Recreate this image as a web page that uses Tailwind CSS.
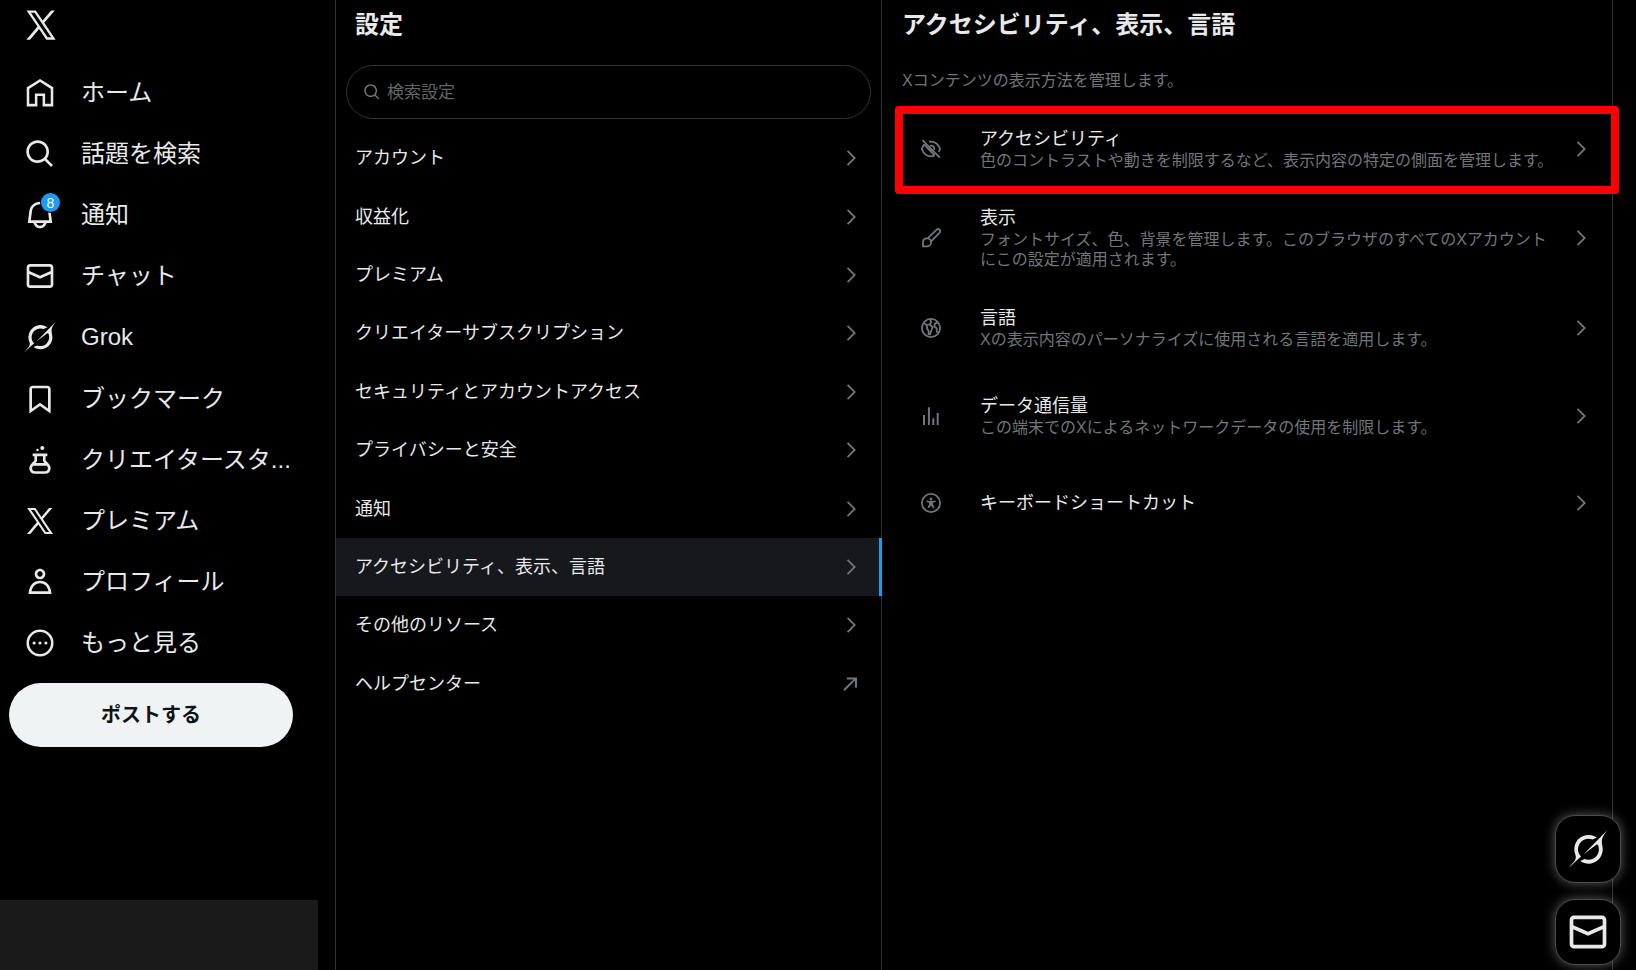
<!DOCTYPE html>
<html lang="ja">
<head>
  <meta charset="UTF-8" />
  <meta name="viewport" content="width=device-width, initial-scale=1.0" />
  <title>設定 / X</title>
  <script src="https://cdn.jsdelivr.net/npm/@tailwindcss/browser@4"></script>
</head>
<body class="bg-black text-[#e7e9ea] font-['Liberation_Sans','Noto_Sans_CJK_JP',sans-serif] overflow-hidden">
  <!-- shared icons -->
  <svg class="hidden">
    <symbol id="x" viewBox="0 0 24 24"><path d="M21.742 21.75l-7.563-11.179 7.056-8.321h-2.456l-5.691 6.714-4.54-6.714H2.359l7.29 10.776L2.25 21.75h2.456l6.035-7.118 4.818 7.118h6.191-.008zM7.739 3.818L18.81 20.182h-2.447L5.29 3.818h2.447z"/></symbol>
    <symbol id="grok" viewBox="0 0 33 32"><path d="M12.745 20.54l10.97-8.19c.539-.4 1.307-.244 1.564.38 1.349 3.288.746 7.241-1.938 9.955-2.683 2.714-6.417 3.31-9.83 1.954l-3.728 1.745c5.347 3.697 11.84 2.782 15.898-1.324 3.219-3.255 4.216-7.692 3.284-11.693l.008.009c-1.351-5.878.332-8.227 3.782-13.031L33 0l-4.54 4.59v-.014L12.743 20.544m-2.263 1.987c-3.837-3.707-3.175-9.446.1-12.755 2.42-2.449 6.388-3.448 9.852-1.979l3.72-1.737c-.67-.49-1.53-1.017-2.515-1.387-4.455-1.854-9.789-.931-13.41 2.728-3.483 3.523-4.579 8.94-2.697 13.561 1.405 3.454-.899 5.898-3.22 8.364C1.49 30.2.666 31.074 0 32l10.478-9.466"/></symbol>
    <symbol id="mail" viewBox="0 0 24 24"><path d="M1.998 5.5c0-1.381 1.119-2.5 2.5-2.5h15c1.381 0 2.5 1.119 2.5 2.5v13c0 1.381-1.119 2.5-2.5 2.5h-15c-1.381 0-2.5-1.119-2.5-2.5v-13zm2.5-.5c-.276 0-.5.224-.5.5v2.764l8 3.638 8-3.636V5.5c0-.276-.224-.5-.5-.5h-15zm15.5 5.463l-8 3.636-8-3.638V18.5c0 .276.224.5.5.5h15c.276 0 .5-.224.5-.5v-8.037z"/></symbol>
    <symbol id="search" viewBox="0 0 24 24"><path d="M10.25 3.75c-3.59 0-6.5 2.91-6.5 6.5s2.91 6.5 6.5 6.5c1.795 0 3.419-.726 4.596-1.904 1.178-1.177 1.904-2.801 1.904-4.596 0-3.59-2.91-6.5-6.5-6.5zm-8.5 6.5c0-4.694 3.806-8.5 8.5-8.5s8.5 3.806 8.5 8.5c0 1.986-.682 3.815-1.824 5.262l4.781 4.781-1.414 1.414-4.781-4.781c-1.447 1.142-3.276 1.824-5.262 1.824-4.694 0-8.5-3.806-8.5-8.5z"/></symbol>
    <symbol id="chevron" viewBox="0 0 24 24"><path d="M14.586 12L7.543 4.96l1.414-1.42L17.414 12l-8.457 8.46-1.414-1.42L14.586 12z"/></symbol>
  </svg>

  <div class="flex h-screen">
    <header class="relative w-[336px] shrink-0 border-r border-[#2f3336]">
      <a href="#" aria-label="X" class="block pl-[23px] pt-[7px]"><svg class="size-9 fill-current"><use href="#x"/></svg></a>
      <nav class="mt-[19px] flex h-[612px] flex-col pl-6 text-2xl">
        <a href="#" class="flex flex-1 items-center gap-[25px]">
          <svg class="size-8" viewBox="0 0 24 24" fill="none" stroke="currentColor" stroke-width="1.9"><path d="M3 8.3L12 2.6l9 5.7v12.8h-6.1v-7.8H9.1v7.8H3z"/></svg>
          <span>ホーム</span>
        </a>
        <a href="#" class="flex flex-1 items-center gap-[25px]">
          <svg class="size-8 fill-current"><use href="#search"/></svg>
          <span>話題を検索</span>
        </a>
        <a href="#" class="flex flex-1 items-center gap-[25px]">
          <span class="relative">
            <svg class="size-8 fill-current" viewBox="0 0 24 24"><path d="M19.993 9.042C19.48 5.017 16.054 2 11.996 2s-7.49 3.021-7.999 7.051L2.866 18H7.1c.463 2.282 2.481 4 4.9 4s4.437-1.718 4.9-4h4.236l-1.143-8.958zM12 20c-1.306 0-2.417-.835-2.829-2h5.658c-.412 1.165-1.523 2-2.829 2zm-6.866-4l.847-6.698C6.364 6.272 8.941 4 11.996 4s5.627 2.268 6.013 5.295L18.864 16H5.134z"/></svg>
            <span class="absolute -top-[6px] left-[17px] flex size-[19px] items-center justify-center rounded-full bg-[#1d9bf0] text-sm text-white ring-1 ring-black">8</span>
          </span>
          <span>通知</span>
        </a>
        <a href="#" class="flex flex-1 items-center gap-[25px]">
          <svg class="size-8 fill-current"><use href="#mail"/></svg>
          <span>チャット</span>
        </a>
        <a href="#" class="flex flex-1 items-center gap-[25px]">
          <svg class="size-8 fill-current"><use href="#grok"/></svg>
          <span>Grok</span>
        </a>
        <a href="#" class="flex flex-1 items-center gap-[25px]">
          <svg class="size-8 fill-current" viewBox="0 0 24 24"><path d="M4 4.5C4 3.12 5.119 2 6.5 2h11C18.881 2 20 3.12 20 4.5v18.44l-8-5.71-8 5.71V4.5zM6.5 4c-.276 0-.5.22-.5.5v14.56l6-4.29 6 4.29V4.5c0-.28-.224-.5-.5-.5h-11z"/></svg>
          <span>ブックマーク</span>
        </a>
        <a href="#" class="flex flex-1 items-center gap-[25px]">
          <svg class="size-8" viewBox="0 0 24 24" fill="none" stroke="currentColor" stroke-width="2">
            <path d="M6.5 8.2h11M8.8 8.2v4.4l-2.600 2.800C3.800 18 5.400 21.400 8 21.400h8c2.600 0 4.200-3.400 1.800-6l-2.600-2.800V8.200M6.600 15.300h10.800"/>
            <circle cx="10.100" cy="4.500" r=".9" fill="currentColor" stroke="none"/>
            <circle cx="13.700" cy="3" r="1.500" fill="currentColor" stroke="none"/>
          </svg>
          <span>クリエイタースタ...</span>
        </a>
        <a href="#" class="flex flex-1 items-center gap-[25px]">
          <svg class="size-8 fill-current"><use href="#x"/></svg>
          <span>プレミアム</span>
        </a>
        <a href="#" class="flex flex-1 items-center gap-[25px]">
          <svg class="size-8 fill-current" viewBox="0 0 24 24"><path d="M5.651 19h12.698c-.337-1.8-1.023-3.21-1.945-4.19C15.318 13.65 13.838 13 12 13s-3.317.65-4.404 1.81c-.922.98-1.608 2.39-1.945 4.19zm.486-5.56C7.627 11.85 9.648 11 12 11s4.373.85 5.863 2.44c1.477 1.58 2.366 3.8 2.632 6.46l.11 1.1H3.395l.11-1.1c.266-2.66 1.155-4.88 2.632-6.46zM12 4c-1.105 0-2 .9-2 2s.895 2 2 2 2-.9 2-2-.895-2-2-2zM8 6c0-2.21 1.791-4 4-4s4 1.79 4 4-1.791 4-4 4-4-1.79-4-4z"/></svg>
          <span>プロフィール</span>
        </a>
        <a href="#" class="flex flex-1 items-center gap-[25px]">
          <svg class="size-8 fill-current" viewBox="0 0 24 24">
            <circle cx="12" cy="12" r="9.2" fill="none" stroke="currentColor" stroke-width="1.9"/>
            <circle cx="7.6" cy="12" r="1.2"/><circle cx="12" cy="12" r="1.2"/><circle cx="16.4" cy="12" r="1.2"/>
          </svg>
          <span>もっと見る</span>
        </a>
      </nav>
      <button class="ml-[9px] mt-[9px] h-16 w-[284px] rounded-full bg-[#eff3f4] text-xl font-bold text-[#0f1419]">ポストする</button>
      <div class="absolute bottom-0 left-0 h-[70px] w-[318px] bg-[#1a1a1a]"></div>
    </header>

    <section class="w-[546px] shrink-0 border-r border-[#2f3336]">
      <h1 class="pl-[19px] pt-[9px] text-2xl font-bold leading-8">設定</h1>
      <label class="mx-[10px] mb-[10px] mt-[24px] flex h-[54px] items-center gap-[6px] rounded-full border border-[#2f3336] pl-4 text-[#71767b]">
        <svg class="size-[18px] fill-current"><use href="#search"/></svg>
        <input type="text" aria-label="検索設定" placeholder="検索設定" class="flex-1 bg-transparent pt-[2px] text-[17px] outline-none placeholder:text-[#626567]" />
      </label>
      <nav class="flex h-[584px] flex-col text-lg">
        <a href="#" class="flex flex-1 items-center justify-between px-[19px]">アカウント<svg class="size-[22px] fill-[#71767b]"><use href="#chevron"/></svg></a>
        <a href="#" class="flex flex-1 items-center justify-between px-[19px]">収益化<svg class="size-[22px] fill-[#71767b]"><use href="#chevron"/></svg></a>
        <a href="#" class="flex flex-1 items-center justify-between px-[19px]">プレミアム<svg class="size-[22px] fill-[#71767b]"><use href="#chevron"/></svg></a>
        <a href="#" class="flex flex-1 items-center justify-between px-[19px]">クリエイターサブスクリプション<svg class="size-[22px] fill-[#71767b]"><use href="#chevron"/></svg></a>
        <a href="#" class="flex flex-1 items-center justify-between px-[19px]">セキュリティとアカウントアクセス<svg class="size-[22px] fill-[#71767b]"><use href="#chevron"/></svg></a>
        <a href="#" class="flex flex-1 items-center justify-between px-[19px]">プライバシーと安全<svg class="size-[22px] fill-[#71767b]"><use href="#chevron"/></svg></a>
        <a href="#" class="flex flex-1 items-center justify-between px-[19px]">通知<svg class="size-[22px] fill-[#71767b]"><use href="#chevron"/></svg></a>
        <a href="#" aria-current="page" class="-mr-px flex flex-1 items-center justify-between border-r-3 border-[#1d9bf0] bg-[#16181c] pl-[19px] pr-[17px]">アクセシビリティ、表示、言語<svg class="size-[22px] fill-[#71767b]"><use href="#chevron"/></svg></a>
        <a href="#" class="flex flex-1 items-center justify-between px-[19px]">その他のリソース<svg class="size-[22px] fill-[#71767b]"><use href="#chevron"/></svg></a>
        <a href="#" class="flex flex-1 items-center justify-between px-[19px]">ヘルプセンター<svg class="size-[22px]" viewBox="0 0 22 22" fill="none" stroke="#71767b" stroke-width="2"><path d="M4 17.2L15.600 5.600M6.800 5.400h9.200v9.200"/></svg></a>
      </nav>
    </section>

    <main class="mr-[23px] flex-1 border-r border-[#2f3336]">
      <h2 class="pl-5 pt-[9px] text-2xl font-bold leading-8">アクセシビリティ、表示、言語</h2>
      <p class="mb-[14px] mt-[30px] pl-5 text-base leading-5 text-[#71767b]">Xコンテンツの表示方法を管理します。</p>
      <div class="relative">
        <a href="#" class="flex min-h-[87px] items-center pl-[37px] pr-5">
          <svg class="size-6 shrink-0" viewBox="0 0 24 24" fill="none" stroke="#71767b" stroke-width="1.8">
            <path d="M3.400 3.200l17.400 17.400"/>
            <path d="M10 4.700c5.400-.8 9.400 2.600 11.200 7.300-.4 1-.9 1.900-1.500 2.700M5.400 7.400C4.200 8.700 3.300 10.300 2.800 12c1.700 4.600 5.100 7.300 9.200 7.300 1.300 0 2.500-.2 3.600-.8M5.400 7.600l10.200 10.800"/>
            <path d="M11 8.900a3.200 3.200 0 0 1 4.100 4.100M9 11.200l3.800 3.800"/>
          </svg>
          <span class="ml-[37px] flex-1">
            <span class="block text-lg leading-6">アクセシビリティ</span>
            <span class="block text-base leading-5 text-[#71767b]">色のコントラストや動きを制限するなど、表示内容の特定の側面を管理します。</span>
          </span>
          <svg class="ml-2 size-[22px] shrink-0 fill-[#71767b]"><use href="#chevron"/></svg>
        </a>
        <div class="pointer-events-none absolute -right-[7px] left-[13px] top-px h-22 rounded-sm border-8 border-[#ff0000]"></div>
      </div>
      <a href="#" class="flex min-h-[87px] items-center py-[14px] pl-[37px] pr-5">
        <svg class="size-6 shrink-0" viewBox="0 0 24 24" fill="none" stroke="#71767b" stroke-width="1.8" stroke-linejoin="round">
          <path d="M8.600 12.300L17.700 3.700c.9-.8 2.100-.8 2.900 0s.8 2 0 2.900l-8.700 9"/>
          <path d="M4 20.400v-4c0-2.400 1.500-4.100 3.900-4.100s4.200 1.700 4.200 3.900-1.700 4.200-4.100 4.200z"/>
        </svg>
        <span class="ml-[37px] flex-1">
          <span class="block text-lg leading-6">表示</span>
          <span class="block text-base leading-5 text-[#71767b]">フォントサイズ、色、背景を管理します。このブラウザのすべてのXアカウントにこの設定が適用されます。</span>
        </span>
        <svg class="ml-2 size-[22px] shrink-0 fill-[#71767b]"><use href="#chevron"/></svg>
      </a>
      <a href="#" class="flex min-h-22 items-center pl-[37px] pr-5">
        <svg class="size-6 shrink-0" viewBox="0 0 24 24" fill="none" stroke="#71767b" stroke-width="1.8" stroke-linejoin="round">
          <circle cx="12" cy="12" r="9.1"/>
          <path d="M5 6.600l2.600 2.600 2.900-.7 1.700-2.200-1-3.100M7.600 9.200l.8 4 1.200 1.600v3.400l1.400.2 1.600-4.400.9-3-2.600-2.300M19.200 6.400l-3.400 1.200-.4 2.900 2.200 1.800.3 4.500"/>
        </svg>
        <span class="ml-[37px] flex-1">
          <span class="block text-lg leading-6">言語</span>
          <span class="block text-base leading-5 text-[#71767b]">Xの表示内容のパーソナライズに使用される言語を適用します。</span>
        </span>
        <svg class="ml-2 size-[22px] shrink-0 fill-[#71767b]"><use href="#chevron"/></svg>
      </a>
      <a href="#" class="flex min-h-[87px] items-center pl-[37px] pr-5">
        <svg class="size-6 shrink-0 fill-[#71767b]" viewBox="0 0 24 24"><path d="M4 11h2v10H4zM8.900 3.200h2V21h-2zM13.300 14.200h2V21h-2zM17.700 9h2v12h-2z"/></svg>
        <span class="ml-[37px] flex-1">
          <span class="block text-lg leading-6">データ通信量</span>
          <span class="block text-base leading-5 text-[#71767b]">この端末でのXによるネットワークデータの使用を制限します。</span>
        </span>
        <svg class="ml-2 size-[22px] shrink-0 fill-[#71767b]"><use href="#chevron"/></svg>
      </a>
      <a href="#" class="flex min-h-22 items-center pl-[37px] pr-5">
        <svg class="size-6 shrink-0 fill-[#71767b]" viewBox="0 0 24 24">
          <circle cx="12" cy="12" r="9.1" fill="none" stroke="#71767b" stroke-width="1.8"/>
          <circle cx="12" cy="7.9" r="1.5"/>
          <path d="M7.500 9.600l3.300.5h2.400l3.300-.5.200 1.400-2.900.7.200 1.800 1.500 3-1.300.8-2.200-2.700-2.200 2.700-1.300-.8 1.500-3 .2-1.800-2.900-.7z"/>
        </svg>
        <span class="ml-[37px] flex-1 text-lg leading-6">キーボードショートカット</span>
        <svg class="ml-2 size-[22px] shrink-0 fill-[#71767b]"><use href="#chevron"/></svg>
      </a>
    </main>
  </div>

  <!-- floating drawers -->
  <div class="fixed bottom-[5px] right-[15px] flex flex-col gap-4">
    <button aria-label="Grok" class="flex h-[68px] w-[66px] items-center justify-center rounded-[20px] border border-[#4a4d50] bg-black shadow-[0_0_12px_rgba(255,255,255,0.35)]"><svg class="size-[38px] fill-current"><use href="#grok"/></svg></button>
    <button aria-label="チャット" class="flex h-[66px] w-[66px] items-center justify-center rounded-[20px] border border-[#4a4d50] bg-black shadow-[0_0_12px_rgba(255,255,255,0.35)]"><svg class="size-11 fill-current"><use href="#mail"/></svg></button>
  </div>
</body>
</html>
